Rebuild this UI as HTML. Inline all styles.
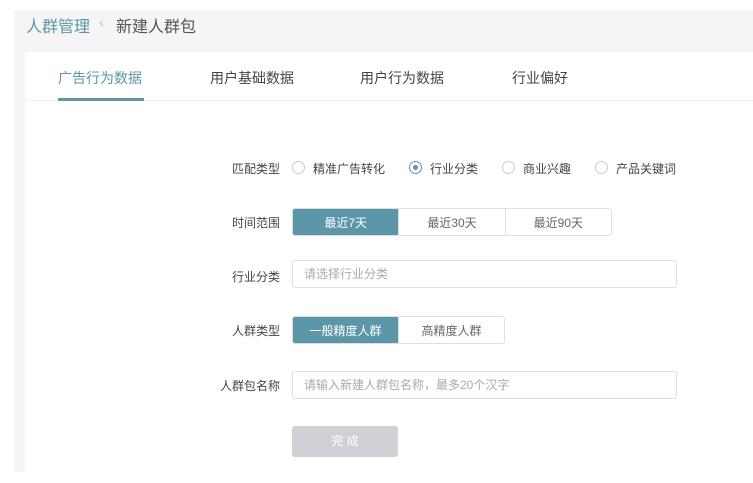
<!DOCTYPE html>
<html><head><meta charset="utf-8"><style>
*{margin:0;padding:0;box-sizing:border-box}
body{width:753px;height:483px;background:#fff;position:relative;overflow:hidden;font-family:"Liberation Sans","Noto Sans CJK SC",sans-serif;color:#555;font-size:12px}
.abs{position:absolute}
.grey{left:14px;top:10px;width:739px;height:462px;background:#f5f5f6}
.card{left:25px;top:52px;width:728px;height:420px;background:#fff}
.lab{position:absolute;width:100px;text-align:right;left:180px;font-size:12px;color:#444}
.seg{position:absolute;display:flex;border:1px solid #dcdfe3;border-radius:3px;overflow:hidden;height:28px}
.seg div{display:flex;align-items:center;justify-content:center;border-right:1px solid #dcdfe3;color:#666;font-size:12px}
.seg div:last-child{border-right:none}
.seg .on{background:#5b97a8;color:#fff}
.inp{position:absolute;border:1px solid #dcdfe3;border-radius:3px;height:28px;padding-left:11px;line-height:26px;color:#aaa;font-size:12px}
.radio{position:absolute;top:161px;width:13px;height:13px;border:1px solid #c8cbd0;border-radius:50%}
.rt{position:absolute;top:160px;font-size:12px;color:#444}
</style></head><body>
<div class="abs grey"></div>
<div class="abs card"></div>
<div class="abs" style="left:26px;top:13px;font-size:16px;color:#5b97a8">人群管理</div>
<div class="abs" style="left:99px;top:14px;font-size:14px;color:#bbb">‹</div>
<div class="abs" style="left:116px;top:13px;font-size:16px;color:#555">新建人群包</div>
<div class="abs" style="left:58px;top:68px;font-size:14px;color:#5b97a8">广告行为数据</div>
<div class="abs" style="left:210px;top:68px;font-size:14px;color:#444">用户基础数据</div>
<div class="abs" style="left:360px;top:68px;font-size:14px;color:#444">用户行为数据</div>
<div class="abs" style="left:512px;top:68px;font-size:14px;color:#444">行业偏好</div>
<div class="abs" style="left:25px;top:100px;width:728px;height:1px;background:#eef0f2"></div>
<div class="abs" style="left:58px;top:98px;width:86px;height:3px;background:#5b97a8"></div>

<div class="lab" style="top:160px">匹配类型</div>
<div class="radio" style="left:292px"></div><div class="rt" style="left:313px">精准广告转化</div>
<div class="radio" style="left:409px;border-color:#5b97a8"><div style="position:absolute;left:3px;top:3px;width:5px;height:5px;border-radius:50%;background:#5b97a8"></div></div><div class="rt" style="left:430px">行业分类</div>
<div class="radio" style="left:502px"></div><div class="rt" style="left:523px">商业兴趣</div>
<div class="radio" style="left:595px"></div><div class="rt" style="left:616px">产品关键词</div>

<div class="lab" style="top:214px">时间范围</div>
<div class="seg" style="left:292px;top:208px;width:320px"><div class="on" style="width:107px">最近7天</div><div style="width:107px">最近30天</div><div style="width:106px">最近90天</div></div>

<div class="lab" style="top:268px">行业分类</div>
<div class="inp" style="left:292px;top:260px;width:385px">请选择行业分类</div>

<div class="lab" style="top:322px">人群类型</div>
<div class="seg" style="left:292px;top:316px;width:213px"><div class="on" style="width:107px">一般精度人群</div><div style="width:106px">高精度人群</div></div>

<div class="lab" style="top:377px">人群包名称</div>
<div class="inp" style="left:292px;top:371px;width:385px">请输入新建人群包名称，最多20个汉字</div>

<div class="abs" style="left:292px;top:426px;width:106px;height:31px;background:#cfd1d6;border-radius:3px;color:#fff;text-align:center;line-height:31px;font-size:12px">完 成</div>
</body></html>
